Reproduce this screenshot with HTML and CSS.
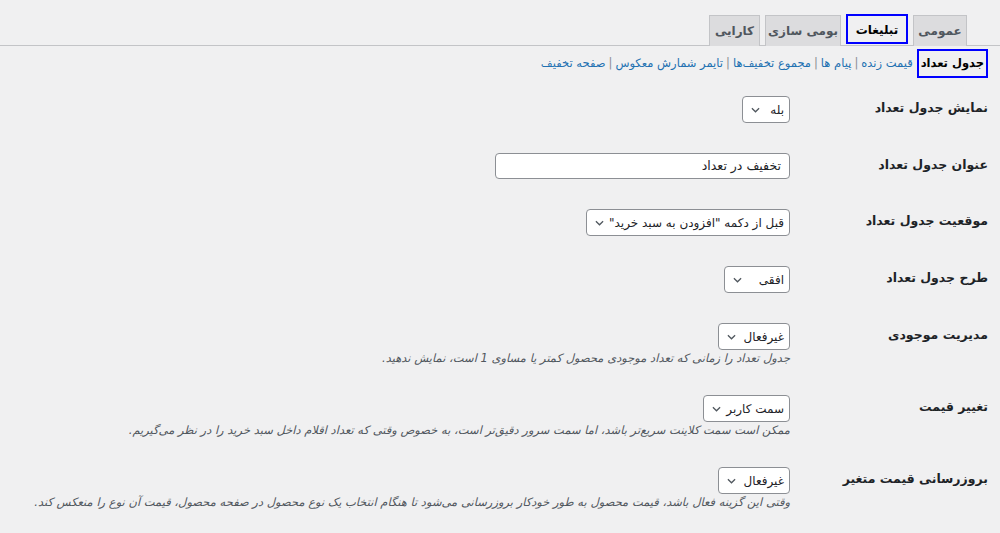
FILE: index.html
```html
<!DOCTYPE html>
<html lang="fa" dir="rtl">
<head>
<meta charset="utf-8">
<title>تنظیمات</title>
<link rel="stylesheet" href="styles.css">
</head>
<body>
<div class="wrap">
  <nav class="tabs">
    <a class="tab t-general">عمومی</a>
    <a class="tab t-promo active">تبلیغات</a>
    <a class="tab t-local">بومی سازی</a>
    <a class="tab t-perf">کارایی</a>
  </nav>

  <ul class="subnav">
    <li><a class="current">جدول تعداد</a></li>
    <li><a class="link">قیمت زنده</a><span class="sep">|</span></li>
    <li><a class="link">پیام ها</a><span class="sep">|</span></li>
    <li><a class="link">مجموع تخفیف‌ها</a><span class="sep">|</span></li>
    <li><a class="link">تایمر شمارش معکوس</a><span class="sep">|</span></li>
    <li><a class="link">صفحه تخفیف</a></li>
  </ul>

  <table class="form-table">
    <tr>
      <th>نمایش جدول تعداد</th>
      <td>
        <div class="select s-yes"><span class="val">بله</span><svg class="chev" viewBox="0 0 10 6" width="9" height="6"><path d="M1 1 L5 5 L9 1" fill="none" stroke="#50575e" stroke-width="1.4"/></svg></div>
      </td>
    </tr>
    <tr>
      <th>عنوان جدول تعداد</th>
      <td><div class="input">تخفیف در تعداد</div></td>
    </tr>
    <tr>
      <th>موقعیت جدول تعداد</th>
      <td>
        <div class="select s-pos"><span class="val">قبل از دکمه "افزودن به سبد خرید"</span><svg class="chev" viewBox="0 0 10 6" width="9" height="6"><path d="M1 1 L5 5 L9 1" fill="none" stroke="#50575e" stroke-width="1.4"/></svg></div>
      </td>
    </tr>
    <tr>
      <th>طرح جدول تعداد</th>
      <td>
        <div class="select s-layout"><span class="val">افقی</span><svg class="chev" viewBox="0 0 10 6" width="9" height="6"><path d="M1 1 L5 5 L9 1" fill="none" stroke="#50575e" stroke-width="1.4"/></svg></div>
      </td>
    </tr>
    <tr>
      <th>مدیریت موجودی</th>
      <td>
        <div class="select s-off"><span class="val">غیرفعال</span><svg class="chev" viewBox="0 0 10 6" width="9" height="6"><path d="M1 1 L5 5 L9 1" fill="none" stroke="#50575e" stroke-width="1.4"/></svg></div>
        <p class="description">جدول تعداد را زمانی که تعداد موجودی محصول کمتر یا مساوی 1 است، نمایش ندهید.</p>
      </td>
    </tr>
    <tr>
      <th>تغییر قیمت</th>
      <td>
        <div class="select s-client"><span class="val">سمت کاربر</span><svg class="chev" viewBox="0 0 10 6" width="9" height="6"><path d="M1 1 L5 5 L9 1" fill="none" stroke="#50575e" stroke-width="1.4"/></svg></div>
        <p class="description">ممکن است سمت کلاینت سریع‌تر باشد، اما سمت سرور دقیق‌تر است، به خصوص وقتی که تعداد اقلام داخل سبد خرید را در نظر می‌گیریم.</p>
      </td>
    </tr>
    <tr>
      <th>بروزرسانی قیمت متغیر</th>
      <td>
        <div class="select s-off"><span class="val">غیرفعال</span><svg class="chev" viewBox="0 0 10 6" width="9" height="6"><path d="M1 1 L5 5 L9 1" fill="none" stroke="#50575e" stroke-width="1.4"/></svg></div>
        <p class="description">وقتی این گزینه فعال باشد، قیمت محصول به طور خودکار بروزرسانی می‌شود تا هنگام انتخاب یک نوع محصول در صفحه محصول، قیمت آن نوع را منعکس کند.</p>
      </td>
    </tr>
  </table>
</div>
</body>
</html>
```

FILE: styles.css
```css
* { box-sizing: border-box; }

html, body {
  margin: 0;
  padding: 0;
  background: #f0f0f1;
}

body {
  direction: rtl;
  font-family: "DejaVu Sans", sans-serif;
  font-size: 13px;
  color: #1d2327;
}

.wrap {
  padding: 14px 0 0 0;
}

/* tabs */
.tabs {
  display: flex;
  align-items: flex-end;
  gap: 5px;
  padding-right: 33px;
  border-bottom: 1px solid #c3c4c7;
  height: 32px;
}

.tab {
  display: block;
  height: 31px;
  margin-bottom: -1px;
  padding: 0 4px;
  line-height: 30px;
  font-size: 12px;
  font-weight: bold;
  color: #50575e;
  background: #dcdcde;
  border: 1px solid #c3c4c7;
  border-bottom: none;
  text-align: center;
  white-space: nowrap;
}

.tab.active {
  color: #000;
  background: #f0f0f1;
  border-color: #f0f0f1;
  outline: 2px solid #0000ff;
  outline-offset: -2px;
  height: 30px;
  margin-bottom: 0;
  align-self: flex-start;
}

.t-general { min-width: 54px; }
.t-promo { min-width: 62px; }
.t-local { min-width: 74px; padding: 0 2px; }
.t-perf { min-width: 51px; }

/* sub navigation */
.subnav {
  list-style: none;
  margin: 2px 12px 0 0;
  padding: 0;
  display: flex;
  align-items: center;
  height: 30px;
  font-size: 11.5px;
  white-space: nowrap;
}

.subnav li {
  display: flex;
  align-items: center;
}

.subnav .current {
  display: block;
  height: 29px;
  min-width: 69px;
  padding: 0 2px;
  line-height: 25px;
  text-align: center;
  font-size: 11.5px;
  font-weight: bold;
  color: #000;
  border: 2px solid #0000ff;
  margin-left: 4px;
}

.subnav .link {
  color: #2271b1;
}

.subnav .sep {
  color: #8c8f94;
  margin: 0 3px;
}

/* form table */
.form-table {
  border-collapse: collapse;
  table-layout: fixed;
  margin: 3px 12px 0 0;
  width: calc(100% - 24px);
}

.form-table th {
  width: 198px;
  padding: 18px 0 0 10px;
  vertical-align: top;
  text-align: right;
  font-size: 12.5px;
  font-weight: bold;
  line-height: 18px;
  color: #1d2327;
  white-space: nowrap;
}

.form-table td {
  padding: 15px 0 15px 0;
  vertical-align: top;
}

.select {
  display: inline-flex;
  align-items: center;
  justify-content: space-between;
  gap: 5px;
  height: 27px;
  background: #fff;
  border: 1px solid #8c8f94;
  border-radius: 4px;
  padding: 0 5px 0 8px;
  font-size: 12px;
  color: #1d2327;
  white-space: nowrap;
}

.chev { flex: none; }

.s-yes { min-width: 48px; }
.s-pos { min-width: 198px; }
.s-layout { min-width: 66px; }
.s-off { min-width: 72px; }
.s-client { min-width: 86px; }

.input {
  width: 295px;
  height: 26px;
  line-height: 24px;
  background: #fff;
  border: 1px solid #8c8f94;
  border-radius: 4px;
  padding: 0 8px;
  font-size: 12.5px;
  color: #1d2327;
}

.description {
  margin: 1px 0 0 0;
  font-size: 11.5px;
  line-height: 14px;
  font-style: italic;
  color: #50575e;
  white-space: nowrap;
}
```
